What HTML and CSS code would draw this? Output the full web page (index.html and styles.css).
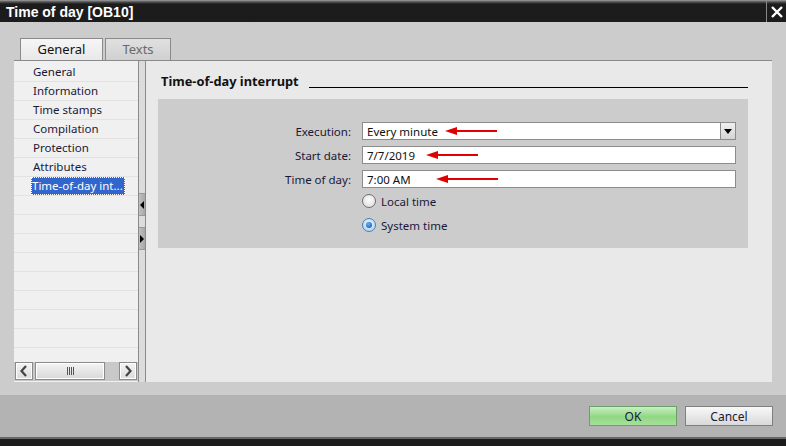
FILE: index.html
```html
<!DOCTYPE html>
<html>
<head>
<meta charset="utf-8">
<link rel="stylesheet" href="styles.css">
</head>
<body>
<div class="window">
  <div class="titlebar">
    <span class="title">Time of day [OB10]</span>
    <span class="close">
      <svg width="14" height="14" viewBox="0 0 14 14"><path d="M2 2 L12 12 M12 2 L2 12" stroke="#fff" stroke-width="2.4"/></svg>
    </span>
  </div>
  <div class="main">
    <div class="tabs">
      <div class="tab active">General</div>
      <div class="tab">Texts</div>
    </div>
    <div class="panel">
      <div class="nav">
        <ul class="list">
          <li>General</li>
          <li>Information</li>
          <li>Time stamps</li>
          <li>Compilation</li>
          <li>Protection</li>
          <li>Attributes</li>
          <li><span class="sel">Time-of-day int...</span></li>
          <li></li><li></li><li></li><li></li><li></li><li></li><li></li><li></li>
        </ul>
        <div class="hscroll">
          <div class="sbtn"><svg width="10" height="12" viewBox="0 0 10 12"><path d="M7 1 L2.5 6 L7 11" fill="none" stroke="#444" stroke-width="2.2"/></svg></div>
          <div class="thumb"><span class="grip"></span></div>
          <div class="track"></div>
          <div class="sbtn"><svg width="10" height="12" viewBox="0 0 10 12"><path d="M3 1 L7.5 6 L3 11" fill="none" stroke="#444" stroke-width="2.2"/></svg></div>
        </div>
      </div>
      <div class="splitter">
        <div class="sarrow"><svg width="5" height="8" viewBox="0 0 5 8"><path d="M4 0 L0 4 L4 8Z" fill="#000"/></svg></div>
        <div class="sarrow"><svg width="5" height="8" viewBox="0 0 5 8"><path d="M0 0 L4 4 L0 8Z" fill="#000"/></svg></div>
      </div>
      <div class="content">
        <div class="heading"><span>Time-of-day interrupt</span><span class="rule"></span></div>
        <div class="box">
          <div class="row">
            <label>Execution:</label>
            <div class="field select"><span>Every minute</span><span class="drop"><svg width="8" height="5" viewBox="0 0 8 5"><path d="M0 0 H8 L4 5Z" fill="#000"/></svg></span>
              <svg class="arrow" style="left:82px" width="52" height="8" viewBox="0 0 52 8"><path d="M0 4 L12 0 L12 3 H52 V5 H12 L12 8Z" fill="#e00000"/></svg>
            </div>
          </div>
          <div class="row">
            <label>Start date:</label>
            <div class="field"><span>7/7/2019</span>
              <svg class="arrow" style="left:63px" width="52" height="8" viewBox="0 0 52 8"><path d="M0 4 L12 0 L12 3 H52 V5 H12 L12 8Z" fill="#e00000"/></svg>
            </div>
          </div>
          <div class="row last">
            <label>Time of day:</label>
            <div class="field"><span>7:00 AM</span>
              <svg class="arrow" style="left:73px" width="62" height="8" viewBox="0 0 62 8"><path d="M0 4 L12 0 L12 3 H62 V5 H12 L12 8Z" fill="#e00000"/></svg>
            </div>
          </div>
          <div class="radio-row"><span class="radio"></span>Local time</div>
          <div class="radio-row"><span class="radio on"><span class="dot"></span></span>System time</div>
        </div>
      </div>
    </div>
  </div>
  <div class="footer">
    <button class="btn ok">OK</button>
    <button class="btn">Cancel</button>
  </div>
  <div class="bottombar"></div>
</div>
</body>
</html>
```

FILE: styles.css
```css
* { box-sizing: border-box; }
html, body { margin: 0; padding: 0; }
body {
  width: 786px;
  height: 446px;
  overflow: hidden;
  font-family: "Noto Sans", "DejaVu Sans", sans-serif;
  font-size: 11.5px;
  color: #1a1838;
  background: #ccc;
}
.window { display: flex; flex-direction: column; height: 446px; }

.titlebar {
  height: 22px;
  flex: none;
  display: flex;
  align-items: center;
  justify-content: space-between;
  background: linear-gradient(#a0a0a0 0, #505050 2px, #1c1c1c 4px, #1b1b1b 100%);
  color: #fff;
}
.title {
  font-family: "Liberation Sans", Arial, sans-serif;
  font-weight: bold;
  font-size: 14px;
  padding-left: 6px;
  padding-top: 2px;
}
.close {
  width: 20px;
  height: 22px;
  border-left: 1px solid #888;
  display: flex;
  align-items: center;
  justify-content: center;
  padding-top: 2px;
}

.main {
  flex: none;
  height: 373px;
  background: #ccc;
  padding: 16px 14px 0 14px;
}
.tabs { display: flex; gap: 2px; margin-left: 6px; height: 22px; }
.tab {
  width: 66px;
  height: 22px;
  border: 1px solid #8a8a8a;
  border-bottom: none;
  background: linear-gradient(#e0e0e0, #d0d0d0);
  color: #6a6a6a;
  font-size: 13px;
  text-align: center;
  line-height: 21px;
}
.tab.active {
  width: 83px;
  background: linear-gradient(#f6f6f6, #e8e8e8);
  color: #111;
}

.panel {
  display: flex;
  height: 322px;
  width: 758px;
  border-top: 1px solid #8a8a8a;
}
.nav {
  width: 124px;
  background: #f0f0f0;
  display: flex;
  flex-direction: column;
  padding-bottom: 1px;
}
.list {
  list-style: none;
  margin: 0;
  padding: 2px 0 0 0;
  flex: 1;
  overflow: hidden;
}
.list li {
  height: 19px;
  line-height: 18px;
  border-bottom: 1px solid #e2e2e2;
  padding-left: 19px;
  white-space: nowrap;
}
.list .sel {
  display: inline-block;
  margin-left: -2px;
  padding: 0 2px 0 1px;
  background: #3266cc;
  color: #fff;
  outline: 1px dotted #fff;
  outline-offset: -1px;
  height: 18px;
}
.hscroll {
  height: 19px;
  display: flex;
  gap: 2px;
  padding: 0 1px;
  background: #c8c8c8;
  flex: none;
}
.sbtn {
  width: 18px;
  height: 18px;
  border: 1px solid #8a8a8a;
  background: linear-gradient(#f4f4f4, #dcdcdc);
  box-shadow: inset 0 0 0 1px #fff;
  display: flex;
  align-items: center;
  justify-content: center;
}
.thumb {
  width: 70px;
  height: 18px;
  border: 1px solid #8a8a8a;
  background: linear-gradient(#f4f4f4, #d8d8d8);
  box-shadow: inset 0 0 0 1px #fff;
  display: flex;
  align-items: center;
  justify-content: center;
}
.grip {
  width: 7px;
  height: 8px;
  background: repeating-linear-gradient(90deg, #555 0 1px, transparent 1px 2px);
}
.track { flex: 1; }

.splitter {
  width: 8px;
  border-left: 1px solid #8a8a8a;
  border-right: 1px solid #8a8a8a;
  background: #dcdcdc;
  padding-top: 132px;
  display: flex;
  flex-direction: column;
  gap: 11px;
}
.sarrow {
  height: 23px;
  background: linear-gradient(90deg, #c0c0c0, #a8a8a8);
  border-top: 1px solid #999;
  border-bottom: 1px solid #999;
  display: flex;
  align-items: center;
  padding-left: 1px;
}

.content {
  flex: 1;
  background: #e9e9e9;
  padding: 12px 24px 0 12px;
}
.heading {
  display: flex;
  align-items: flex-end;
  gap: 10px;
  height: 17px;
  padding-left: 3px;
  font-family: "Noto Sans", "DejaVu Sans", sans-serif;
  font-weight: bold;
  font-size: 12.8px;
  color: #111;
}
.heading .rule {
  flex: 1;
  border-bottom: 1px solid #000;
  margin-bottom: 2px;
}
.box {
  margin-top: 9px;
  height: 149px;
  background: #cccccc;
  padding: 23px 12px 0 0;
}
.row {
  display: flex;
  align-items: center;
  height: 18px;
  margin-bottom: 6px;
}
.row.last { margin-bottom: 1px; }
.row label {
  width: 194px;
  text-align: right;
  padding-right: 1px;
}
.field {
  position: relative;
  margin-left: 10px;
  flex: 1;
  height: 18px;
  background: #fff;
  border: 1px solid #8c8c8c;
  display: flex;
  align-items: center;
  padding-left: 4px;
  color: #111;
}
.field > span:first-child { flex: 1; }
.drop {
  width: 15px;
  height: 16px;
  border-left: 1px solid #8c8c8c;
  background: linear-gradient(#f0f0f0, #d4d4d4);
  display: flex;
  align-items: center;
  justify-content: center;
}
.arrow { position: absolute; top: 4px; }
.radio-row {
  display: flex;
  align-items: center;
  height: 24px;
  padding-left: 204px;
  gap: 5px;
}
.radio {
  width: 14px;
  height: 14px;
  border-radius: 50%;
  border: 1px solid #6e6e6e;
  background: radial-gradient(circle at 50% 40%, #fdfdfd, #d8d8d8);
  display: flex;
  align-items: center;
  justify-content: center;
}
.radio.on { border-color: #4a7fb8; background: radial-gradient(circle at 50% 40%, #eaf5ff, #a8cde8); }
.dot {
  width: 6px;
  height: 6px;
  border-radius: 50%;
  background: radial-gradient(circle at 40% 35%, #6ab0f0, #0c4fa0);
}

.footer {
  flex: none;
  height: 42px;
  background: #b3b3b3;
  display: flex;
  justify-content: flex-end;
  align-items: flex-start;
  gap: 8px;
  padding: 11px 13px 0 0;
}
.btn {
  width: 88px;
  height: 20px;
  border: 1px solid #7f7f7f;
  background: linear-gradient(#f8f8f8, #d9d9d9);
  font-family: "Noto Sans", "DejaVu Sans", sans-serif;
  font-size: 12px;
  color: #1a1838;
  padding: 0;
  line-height: 17px;
}
.btn.ok {
  background: linear-gradient(#c8f0c0, #8fd884 55%, #a8e09c);
  border-color: #6e9e6a;
}
.bottombar {
  flex: 1;
  background: #1c1c1c;
  border-top: 2px solid #666;
}
```
